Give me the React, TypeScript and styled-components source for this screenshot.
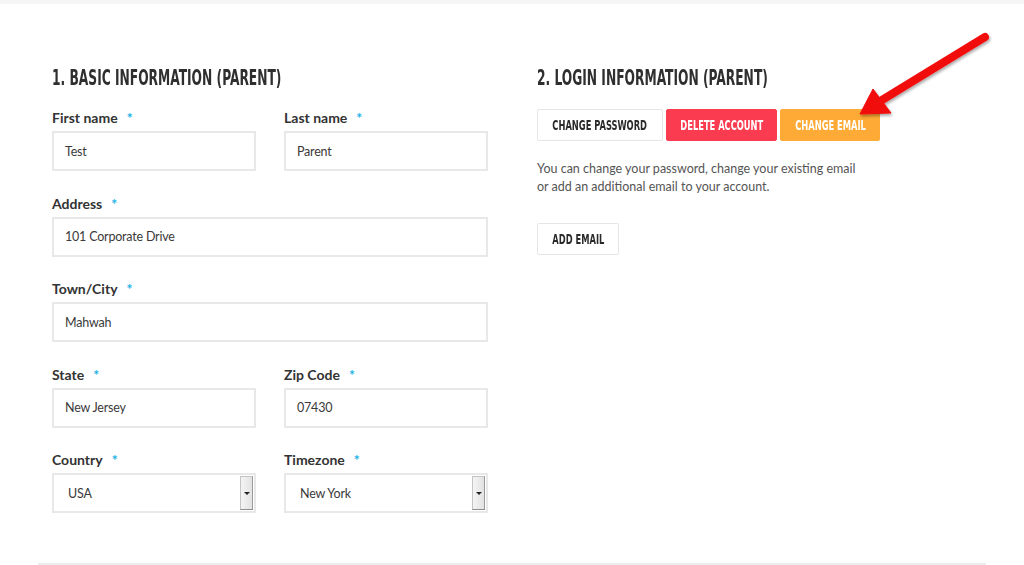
import styled, { createGlobalStyle } from 'styled-components';

const GlobalStyle = createGlobalStyle`
  html, body {
    margin: 0;
    padding: 0;
    background: #ffffff;
    font-family: 'Lato', 'Open Sans', sans-serif;
    color: #333333;
  }
  * {
    box-sizing: border-box;
  }
`;

const TopBand = styled.div`
  height: 4px;
  background: #f6f6f6;
`;

const Page = styled.div`
  position: relative;
  height: 561px;
  padding: 0 38px;
`;

const Card = styled.div`
  height: 100%;
  padding: 62px 14px 0;
  border-bottom: 2px solid #ececec;
  display: flex;
  gap: 49px;
`;

const Column = styled.section<{ $width: number }>`
  width: ${p => p.$width}px;
  display: flex;
  flex-direction: column;
`;

const Heading = styled.h2`
  margin: 0 0 19px;
  height: 24px;
  line-height: 24px;
  font-family: 'DejaVu Sans Condensed', 'DejaVu Sans', sans-serif;
  font-weight: 700;
  font-size: 20.5px;
  color: #2f2f2f;
  white-space: nowrap;
  span {
    display: inline-block;
    transform: scaleX(0.665);
    transform-origin: left center;
  }
`;

const Row = styled.div`
  display: grid;
  grid-template-columns: 1fr 1fr;
  column-gap: 28px;
`;

const Field = styled.div`
  display: flex;
  flex-direction: column;
  margin-bottom: 23.5px;
`;

const Label = styled.label`
  height: 18px;
  line-height: 18px;
  margin-bottom: 4px;
  font-family: 'Lato', sans-serif;
  font-weight: 700;
  font-size: 14px;
  color: #333333;
  em {
    font-style: normal;
    font-weight: 900;
    color: #1fb4e6;
    margin-left: 9px;
  }
`;

const Input = styled.div`
  height: 40px;
  border: 2px solid #e8e8e8;
  padding: 0 11px;
  display: flex;
  align-items: center;
  font-family: 'Lato', sans-serif;
  font-size: 12.5px;
  letter-spacing: -0.2px;
  color: #3a3a3a;
`;

const SelectBox = styled.div`
  height: 40px;
  border: 2px solid #e8e8e8;
  display: flex;
  align-items: stretch;
  font-family: 'Lato', sans-serif;
  font-size: 12.5px;
  letter-spacing: -0.2px;
  color: #3a3a3a;
`;

const SelectValue = styled.span`
  flex: 1;
  display: flex;
  align-items: center;
  padding-left: 14px;
`;

const SelectArrow = styled.span`
  width: 13px;
  margin: 1px 1px 1px 0;
  border: 1px solid #c4c4c4;
  border-right-color: #9a9a9a;
  border-bottom-color: #8f8f8f;
  background: linear-gradient(to right, #f4f4f4, #e2e2e2);
  display: flex;
  align-items: center;
  justify-content: center;
  &::after {
    content: '';
    border-left: 3px solid transparent;
    border-right: 3px solid transparent;
    border-top: 3px solid #222;
  }
`;

const ButtonRow = styled.div`
  display: flex;
  gap: 3px;
`;

type Variant = 'plain' | 'danger' | 'warning';

const fills: Record<Variant, string> = {
  plain: '#ffffff',
  danger: '#fb3c50',
  warning: '#fdab36',
};

const Button = styled.button<{ $variant?: Variant; $width: number }>`
  width: ${p => p.$width}px;
  height: 32px;
  padding: 0;
  border-radius: 2px;
  border: 1px solid ${p => (p.$variant && p.$variant !== 'plain' ? fills[p.$variant] : '#e6e6e6')};
  background: ${p => fills[p.$variant ?? 'plain']};
  color: ${p => (p.$variant && p.$variant !== 'plain' ? '#ffffff' : '#2a2a2a')};
  font-family: 'DejaVu Sans Condensed', 'DejaVu Sans', sans-serif;
  font-weight: 700;
  font-size: 14px;
  white-space: nowrap;
  overflow: visible;
  display: flex;
  align-items: center;
  justify-content: center;
  cursor: pointer;
  span {
    display: inline-block;
    flex-shrink: 0;
    transform: scaleX(0.66);
  }
`;

const Note = styled.p`
  margin: 19px 0 27px;
  width: 330px;
  font-family: 'Lato', sans-serif;
  font-size: 12.5px;
  line-height: 18px;
  color: #555555;
`;

const Arrow = styled.svg`
  position: absolute;
  left: 850px;
  top: 21px;
`;

const Req = () => <em>*</em>;

const TextField = ({ label, value }: { label: string; value: string }) => (
  <Field>
    <Label>
      {label}
      <Req />
    </Label>
    <Input>{value}</Input>
  </Field>
);

const SelectField = ({ label, value }: { label: string; value: string }) => (
  <Field>
    <Label>
      {label}
      <Req />
    </Label>
    <SelectBox>
      <SelectValue>{value}</SelectValue>
      <SelectArrow />
    </SelectBox>
  </Field>
);

const App = () => {
  return (
    <>
      <GlobalStyle />
      <TopBand />
      <Page>
        <Card>
          <Column $width={436}>
            <Heading>
              <span>1. BASIC INFORMATION (PARENT)</span>
            </Heading>
            <Row>
              <TextField label="First name" value="Test" />
              <TextField label="Last name" value="Parent" />
            </Row>
            <TextField label="Address" value="101 Corporate Drive" />
            <TextField label="Town/City" value="Mahwah" />
            <Row>
              <TextField label="State" value="New Jersey" />
              <TextField label="Zip Code" value="07430" />
            </Row>
            <Row>
              <SelectField label="Country" value="USA" />
              <SelectField label="Timezone" value="New York" />
            </Row>
          </Column>
          <Column $width={400}>
            <Heading>
              <span>2. LOGIN INFORMATION (PARENT)</span>
            </Heading>
            <ButtonRow>
              <Button $variant="plain" $width={126}><span>CHANGE PASSWORD</span></Button>
              <Button $variant="danger" $width={111}><span>DELETE ACCOUNT</span></Button>
              <Button $variant="warning" $width={100}><span>CHANGE EMAIL</span></Button>
            </ButtonRow>
            <Note>
              You can change your password, change your existing email or add an additional email to your account.
            </Note>
            <div>
              <Button $variant="plain" $width={82}><span>ADD EMAIL</span></Button>
            </div>
          </Column>
        </Card>
        <Arrow width="150" height="100" viewBox="0 0 150 100">
          <defs>
            <filter id="shadow" x="-20%" y="-20%" width="140%" height="140%">
              <feDropShadow dx="1" dy="2" stdDeviation="1.5" floodColor="#000" floodOpacity="0.35" />
            </filter>
          </defs>
          <g filter="url(#shadow)" fill="#f20d0d" stroke="#f20d0d">
            <line x1="135" y1="12" x2="32" y2="75" strokeWidth="8" strokeLinecap="round" />
            <polygon points="10,89 23,64 41,88" strokeWidth="1" strokeLinejoin="round" />
          </g>
        </Arrow>
      </Page>
    </>
  );
};

export default App;
